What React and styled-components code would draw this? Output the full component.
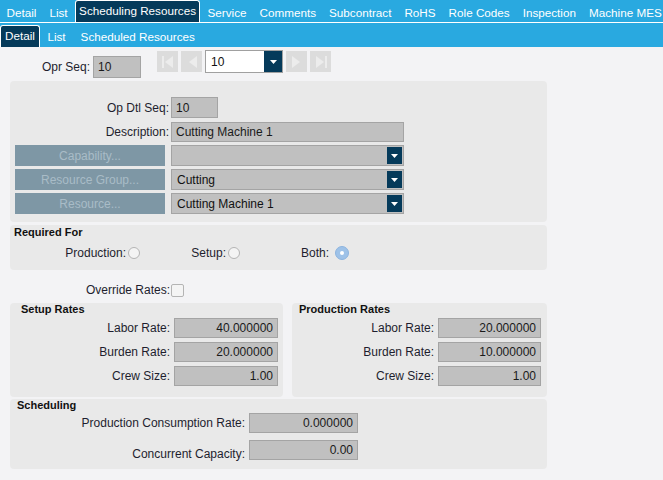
import React from 'react';
import styled, { createGlobalStyle } from 'styled-components';

const GlobalStyle = createGlobalStyle`
  body {
    margin: 0;
    background: #f3f3f5;
    font-family: "Liberation Sans", Arial, sans-serif;
    font-size: 12px;
    color: #1e1e2e;
  }
`;

const NAVY = '#053a5a';
const BLUE = '#29a9e0';

const Page = styled.div`
  width: 663px;
  height: 480px;
  overflow: hidden;
`;

const TopBar = styled.div`
  display: flex;
  height: 22px;
  background: ${BLUE};
  border-bottom: 1px solid #fff;
`;

const SubBar = styled.div`
  display: flex;
  align-items: flex-end;
  height: 24px;
  background: ${BLUE};
`;

const Tab = styled.div`
  display: flex;
  align-items: center;
  box-sizing: border-box;
  padding: ${(p) => (p.$active ? '0 3px 3px' : '2px 6.5px 0')};
  margin: ${(p) => (p.$active ? '0 1px' : '0')};
  color: #fff;
  font-size: 11.7px;
  white-space: nowrap;
  background: ${(p) => (p.$active ? NAVY : 'transparent')};
  border: ${(p) => (p.$active ? '1px solid #fff' : 'none')};
  border-bottom: none;
  border-radius: 3px 3px 0 0;
`;

const SubTab = styled(Tab)`
  height: ${(p) => (p.$active ? '22px' : '24px')};
  padding: ${(p) => (p.$active ? '0 4px 2px' : '2px 7.5px 0')};
  margin: 0;
`;

const Content = styled.div`
  padding: 4px 0 0 10px;
  width: 537px;
`;

const OprRow = styled.div`
  display: flex;
  align-items: flex-start;
  height: 27px;
`;

const Label = styled.div`
  width: ${(p) => p.$w}px;
  text-align: right;
  white-space: nowrap;
  align-self: ${(p) => p.$self || 'center'};
`;

const Field = styled.div`
  box-sizing: border-box;
  width: ${(p) => p.$w}px;
  height: ${(p) => p.$h || 20}px;
  margin-top: ${(p) => p.$mt || 0}px;
  background: #c0c0c0;
  border: 1px solid #a4a4a4;
  display: flex;
  align-items: center;
  justify-content: ${(p) => (p.$right ? 'flex-end' : 'flex-start')};
  padding: 0 4px;
  color: #1a1a1a;
  white-space: nowrap;
`;

const Navigator = styled.div`
  display: flex;
  gap: 3px;
  margin-left: 16px;
`;

const NavBtn = styled.div`
  width: 21px;
  height: 21px;
  background: #dcdcdc;
  display: flex;
  align-items: center;
  justify-content: center;
`;

const NavSelect = styled.div`
  box-sizing: border-box;
  width: 78px;
  height: 23px;
  margin-top: -1px;
  background: #fff;
  border: 1px solid #a0a0a0;
  display: flex;
  align-items: stretch;
`;

const SelectText = styled.div`
  flex: 1;
  display: flex;
  align-items: center;
  padding-left: 5px;
  color: #111;
`;

const ArrowBtn = styled.div`
  width: ${(p) => p.$w}px;
  background: ${NAVY};
  display: flex;
  align-items: center;
  justify-content: center;
`;

const Panel = styled.div`
  box-sizing: border-box;
  width: ${(p) => p.$w || 537}px;
  height: ${(p) => p.$h}px;
  margin-top: ${(p) => p.$mt || 0}px;
  padding: ${(p) => p.$pad || '0'};
  background: #e9e9e9;
  border-radius: 4px;
`;

const Title = styled.div`
  font-weight: bold;
  font-size: 11px;
  color: #111;
  padding-left: ${(p) => p.$indent || 0}px;
  height: 13px;
  line-height: 13px;
`;

const FormGrid = styled.div`
  display: grid;
  grid-template-columns: 154px auto;
  column-gap: 2px;
  row-gap: 3px;
  grid-auto-rows: 21px;
  align-items: center;
`;

const LookupBtn = styled.div`
  width: 150px;
  height: 21px;
  background: #7e97a5;
  color: #a9bcc7;
  display: flex;
  align-items: center;
  justify-content: center;
`;

const Combo = styled.div`
  box-sizing: border-box;
  width: 233px;
  height: 21px;
  background: #c0c0c0;
  border: 1px solid #a4a4a4;
  display: flex;
  align-items: stretch;
  padding: 1px 1px 1px 0;
`;

const RadioRow = styled.div`
  display: flex;
  align-items: center;
  margin-top: 7px;
`;

const RadioLabel = styled.div`
  width: ${(p) => p.$w}px;
  margin-right: ${(p) => p.$gap}px;
  text-align: right;
`;

const Radio = styled.div`
  box-sizing: border-box;
  width: ${(p) => (p.$on ? 14 : 12)}px;
  height: ${(p) => (p.$on ? 14 : 12)}px;
  border-radius: 50%;
  border: 1px solid ${(p) => (p.$on ? '#8db4df' : '#b4b4b4')};
  background: ${(p) => (p.$on ? '#9ec2e8' : '#f4f4f4')};
  display: flex;
  align-items: center;
  justify-content: center;
  &::after {
    content: '';
    display: ${(p) => (p.$on ? 'block' : 'none')};
    width: 4px;
    height: 4px;
    border-radius: 50%;
    background: #fff;
  }
`;

const CheckRow = styled.div`
  display: flex;
  align-items: center;
  height: 20px;
  margin-top: 10px;
`;

const Checkbox = styled.div`
  box-sizing: border-box;
  width: 13px;
  height: 13px;
  margin-left: 1px;
  border: 1px solid #b4b4b4;
  border-radius: 2px;
  background: #f4f4f4;
`;

const RatesRow = styled.div`
  display: flex;
  gap: 9px;
  margin-top: 3px;
`;

const Rows = styled.div`
  display: grid;
  grid-template-columns: ${(p) => p.$label}px ${(p) => p.$input}px;
  column-gap: ${(p) => p.$gap || 4}px;
  grid-auto-rows: ${(p) => p.$rowH}px;
  row-gap: ${(p) => p.$rowGap}px;
  align-items: center;
  margin-top: ${(p) => p.$mt || 0}px;
`;

const Caret = () => (
  <svg width="7" height="4" viewBox="0 0 7 4">
    <path d="M0 0h7L3.5 4z" fill="#fff" />
  </svg>
);

const NavIcon = ({ dir, end }) => (
  <svg width="14" height="14" viewBox="0 0 14 14">
    {dir === 'left' ? (
      <>
        {end && <rect x="1" y="1" width="2" height="12" fill="#ececec" />}
        <path d="M12 1v12L4 7z" fill="#ececec" />
      </>
    ) : (
      <>
        <path d="M2 1v12l8-6z" fill="#ececec" />
        {end && <rect x="11" y="1" width="2" height="12" fill="#ececec" />}
      </>
    )}
  </svg>
);

const ComboField = ({ value }) => (
  <Combo>
    <SelectText>{value}</SelectText>
    <ArrowBtn $w={15}>
      <Caret />
    </ArrowBtn>
  </Combo>
);

const RateRows = ({ label, input, values }) => (
  <Rows $label={label} $input={input} $rowH={20} $rowGap={4} $mt={2}>
    <Label $w={label}>Labor Rate:</Label>
    <Field $w={input} $right>{values[0]}</Field>
    <Label $w={label}>Burden Rate:</Label>
    <Field $w={input} $right>{values[1]}</Field>
    <Label $w={label}>Crew Size:</Label>
    <Field $w={input} $right>{values[2]}</Field>
  </Rows>
);

const topTabs = [
  'Detail',
  'List',
  'Scheduling Resources',
  'Service',
  'Comments',
  'Subcontract',
  'RoHS',
  'Role Codes',
  'Inspection',
  'Machine MES',
];

export default function App() {
  return (
    <Page>
      <GlobalStyle />
      <TopBar>
        {topTabs.map((t) => (
          <Tab key={t} $active={t === 'Scheduling Resources'}>
            {t}
          </Tab>
        ))}
      </TopBar>
      <SubBar>
        <SubTab $active>Detail</SubTab>
        <SubTab>List</SubTab>
        <SubTab>Scheduled Resources</SubTab>
      </SubBar>

      <Content>
        <OprRow>
          <Label $w={80} $self="flex-start" style={{ marginTop: 9 }}>
            Opr Seq:
          </Label>
          <Field $w={48} $h={22} $mt={5} style={{ marginLeft: 3 }}>
            10
          </Field>
          <Navigator>
            <NavBtn>
              <NavIcon dir="left" end />
            </NavBtn>
            <NavBtn>
              <NavIcon dir="left" />
            </NavBtn>
            <NavSelect>
              <SelectText>10</SelectText>
              <ArrowBtn $w={18}>
                <Caret />
              </ArrowBtn>
            </NavSelect>
            <NavBtn>
              <NavIcon dir="right" />
            </NavBtn>
            <NavBtn>
              <NavIcon dir="right" end />
            </NavBtn>
          </Navigator>
        </OprRow>

        <Panel $h={141} $mt={3} $pad="16px 0 8px 5px">
          <FormGrid>
            <Label $w={154}>Op Dtl Seq:</Label>
            <Field $w={47} $h={21}>10</Field>
            <Label $w={154}>Description:</Label>
            <Field $w={233} $h={20}>Cutting Machine 1</Field>
            <LookupBtn>Capability...</LookupBtn>
            <ComboField value="" />
            <LookupBtn>Resource Group...</LookupBtn>
            <ComboField value="Cutting" />
            <LookupBtn>Resource...</LookupBtn>
            <ComboField value="Cutting Machine 1" />
          </FormGrid>
        </Panel>

        <Panel $h={45} $mt={3} $pad="1px 4px">
          <Title>Required For</Title>
          <RadioRow>
            <RadioLabel $w={112} $gap={2}>Production:</RadioLabel>
            <Radio />
            <RadioLabel $w={86} $gap={2}>Setup:</RadioLabel>
            <Radio />
            <RadioLabel $w={89} $gap={6}>Both:</RadioLabel>
            <Radio $on />
          </RadioRow>
        </Panel>

        <CheckRow>
          <Label $w={160}>Override Rates:</Label>
          <Checkbox />
        </CheckRow>

        <RatesRow>
          <Panel $w={273} $h={94}>
            <Title $indent={11}>Setup Rates</Title>
            <RateRows
              label={160}
              input={104}
              values={['40.000000', '20.000000', '1.00']}
            />
          </Panel>
          <Panel $w={255} $h={94}>
            <Title $indent={7}>Production Rates</Title>
            <RateRows
              label={142}
              input={103}
              values={['20.000000', '10.000000', '1.00']}
            />
          </Panel>
        </RatesRow>

        <Panel $h={70} $mt={2}>
          <Title $indent={7}>Scheduling</Title>
          <Rows $label={235} $input={109} $rowH={20} $rowGap={7} $mt={1}>
            <Label $w={235}>Production Consumption Rate:</Label>
            <Field $w={109} $right>0.000000</Field>
            <Label $w={235} style={{ marginTop: 8 }}>
              Concurrent Capacity:
            </Label>
            <Field $w={109} $right>0.00</Field>
          </Rows>
        </Panel>
      </Content>
    </Page>
  );
}
